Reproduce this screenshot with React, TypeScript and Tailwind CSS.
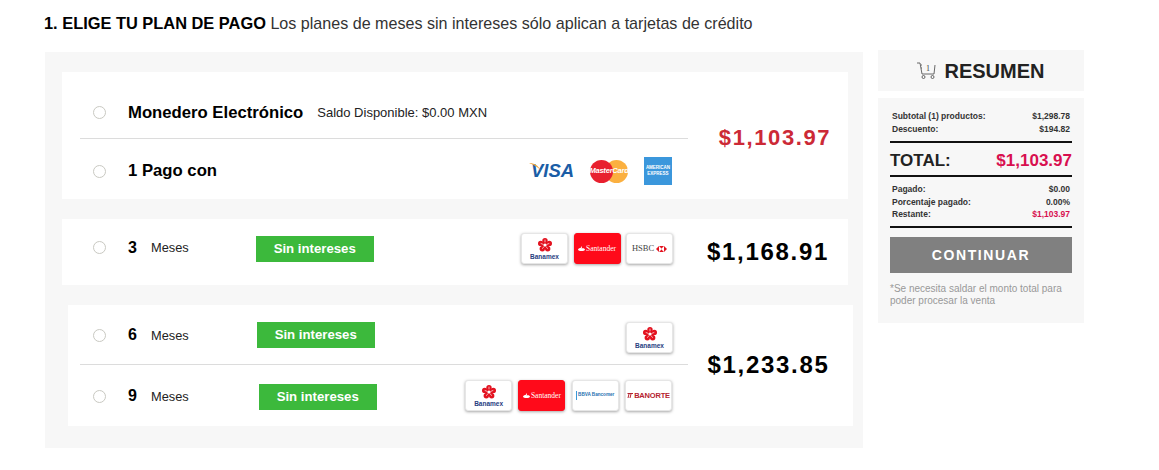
const Radio = () => (
  <span className="w-[13px] h-[13px] rounded-full border border-[#c9c9c2] bg-white shrink-0" />
);

const Badge = ({ className }: { className: string }) => (
  <span className={`w-[118px] h-[26px] bg-[#3cb93c] text-white text-[13.2px] font-bold flex items-center justify-center ${className}`}>
    Sin intereses
  </span>
);

const Flower = () => (
  <svg width="14" height="14" viewBox="0 0 26 26" className="block">
    <g fill="#e3121f">
      <circle cx="13" cy="5" r="5" />
      <circle cx="21" cy="10" r="5" />
      <circle cx="18" cy="20" r="5" />
      <circle cx="8" cy="20" r="5" />
      <circle cx="5" cy="10" r="5" />
      <circle cx="13" cy="13" r="7" />
    </g>
    <circle cx="13" cy="13" r="3" fill="#fff" />
    <path d="M13 3v5M21 10l-5 2M18 20l-3-4M8 20l3-4M5 10l5 2" stroke="#fff" strokeWidth="1.2" />
  </svg>
);

const BankCard = ({ children, red }: { children: React.ReactNode; red?: boolean }) => (
  <div className={`w-[47px] h-[31px] rounded-[3px] flex flex-col items-center justify-center border border-[#e6e6e6] shadow-[0_1px_3px_rgba(0,0,0,0.35)] ${red ? "bg-[#ff0a1a] border-[#ff0a1a]" : "bg-white"}`}>
    {children}
  </div>
);

const Banamex = () => (
  <BankCard>
    <Flower />
    <span className="text-[6.5px] leading-[7px] mt-[1px] font-bold text-[#27407f]">Banamex</span>
  </BankCard>
);

const Santander = () => (
  <BankCard red>
    <span className="flex items-center gap-[1px] text-white text-[7.5px] font-['Liberation_Serif',serif]">
      <svg width="7" height="5" viewBox="0 0 14 10">
        <path d="M7 0c2 2 1 3 0 5 3-1 6 0 7 2 0 2-4 3-7 3s-7-1-7-3c1-2 3-3 5-3 1-1 2-2 2-4z" fill="#fff" />
      </svg>
      Santander
    </span>
  </BankCard>
);

const Hsbc = () => (
  <BankCard>
    <span className="flex items-center gap-[2px] text-[#444] text-[8.5px] font-['Liberation_Serif',serif]">
      HSBC
      <svg width="11" height="6" viewBox="0 0 22 12">
        <path d="M0 6 6 0h10l6 6-6 6H6z" fill="#e3121f" />
        <path d="M6 0l6 6-6 6zM16 0l-6 6 6 6z" fill="#fff" />
      </svg>
    </span>
  </BankCard>
);

const Bbva = () => (
  <BankCard>
    <span className="flex items-center gap-[1px] text-[4.6px] font-bold text-[#1f6fb0] whitespace-nowrap">
      <span className="w-[1px] h-[9px] bg-[#3a9ad9]" />
      BBVA Bancomer
    </span>
  </BankCard>
);

const Banorte = () => (
  <BankCard>
    <span className="flex items-center text-[7.5px] font-bold text-[#b5232f] tracking-[-0.2px]">
      <svg width="6" height="5" viewBox="0 0 12 10" className="mr-[1px]">
        <path d="M2 0h10v2H9L7 10H5l2-8H5L3 10H1l2-8H0z" fill="#b5232f" />
      </svg>
      BANORTE
    </span>
  </BankCard>
);

const Row = ({ n, badge, children, height }: { n: string; badge: string; children: React.ReactNode; height: string }) => (
  <div className={`flex items-center pl-[13px] pr-[15px] ${height}`}>
    <Radio />
    <span className="ml-[22px] w-[23px] text-[16px] font-bold text-black">{n}</span>
    <span className="text-[12.8px] text-[#222] mt-[1px]">Meses</span>
    <Badge className={badge} />
    <div className="ml-auto flex items-center">{children}</div>
  </div>
);

const SummaryRow = ({ label, value, valueClass }: { label: string; value: string; valueClass?: string }) => (
  <div className="flex justify-between h-[12.5px] leading-[12.5px] px-[2px]">
    <span>{label}</span>
    <span className={valueClass}>{value}</span>
  </div>
);

export default function App() {
  return (
    <div className="w-[1159px] h-[470px] bg-white overflow-hidden font-['Liberation_Sans',Arial,sans-serif] text-[#111]">
      <h1 className="pl-[44px] pt-[14px] h-[50px] text-[16.1px] leading-[18px] font-normal text-[#333]">
        <b className="text-black text-[16.4px]">1. ELIGE TU PLAN DE PAGO</b> Los planes de meses sin intereses sólo aplican a tarjetas de crédito
      </h1>

      <div className="flex items-start pl-[45px] gap-[15px]">
        <div className="w-[818px] h-[396px] mt-[2px] bg-[#f7f7f7] pt-[20px] pl-[17px]">
          {/* contado */}
          <div className="w-[786px] h-[127px] bg-white flex pl-[18px]">
            <div className="w-[608px]">
              <div className="h-[67px] border-b border-[#dcdcdc] flex items-center pl-[13px] pt-[15px]">
                <Radio />
                <span className="ml-[22px] text-[16.7px] font-bold text-black">Monedero Electrónico</span>
                <span className="ml-[14px] text-[13px] text-[#222]">Saldo Disponible: $0.00 MXN</span>
              </div>
              <div className="h-[60px] flex items-center pl-[13px] pr-[16px] pt-[4px]">
                <Radio />
                <span className="ml-[22px] text-[16.7px] font-bold text-black">1 Pago con</span>
                <div className="ml-auto flex items-center gap-[16px]">
                  <span className="relative text-[#1a5da6] text-[18.5px] font-bold italic leading-none w-[45px] pl-[2px]">
                    <svg width="14" height="8" viewBox="0 0 14 8" className="absolute left-0 top-[1px]">
                      <path d="M0 0c5 0 9 2 12 8C9 4 5 2 0 0z" fill="#f2a53a" />
                    </svg>
                    VISA
                  </span>
                  <span className="relative w-[38px] h-[23px] flex items-center justify-center">
                    <svg width="38" height="23" viewBox="0 0 38 23" className="absolute inset-0">
                      <circle cx="26.500" cy="11.500" r="11.500" fill="#fbb040" />
                      <circle cx="11.500" cy="11.500" r="11.500" fill="#e8202f" />
                    </svg>
                    <span className="relative text-white text-[7.500px] font-bold italic tracking-[-0.2px]">MasterCard</span>
                  </span>
                  <span className="w-[28px] h-[28px] bg-[#3b97dc] flex flex-col items-center justify-center text-white text-[4.5px] font-bold leading-[6px]">
                    <span>AMERICAN</span>
                    <span>EXPRESS</span>
                  </span>
                </div>
              </div>
            </div>
            <div className="flex-1 flex items-center justify-center pl-[14px] pt-[3px]">
              <span className="text-[22px] font-bold tracking-[1.6px] text-[#cc2936]">$1,103.97</span>
            </div>
          </div>

          {/* 3 meses */}
          <div className="w-[786px] h-[66px] mt-[20px] bg-white flex pl-[18px]">
            <div className="w-[608px]">
              <Row n="3" badge="ml-[67px] mt-[3px]" height="h-[57px]">
                <div className="flex gap-[5.500px] mt-[2px]">
                  <Banamex />
                  <Santander />
                  <Hsbc />
                </div>
              </Row>
            </div>
            <div className="flex-1 flex items-center justify-center">
              <span className="text-[24px] font-bold tracking-[1.7px] text-black">$1,168.91</span>
            </div>
          </div>

          {/* 6 y 9 meses */}
          <div className="w-[785px] h-[121px] mt-[20px] ml-[6px] bg-white flex pl-[12px]">
            <div className="w-[608px]">
              <div className="border-b border-[#dcdcdc]">
                <Row n="6" badge="ml-[68px]" height="h-[59px] pt-[1px]">
                  <div className="mt-[5px]">
                    <Banamex />
                  </div>
                </Row>
              </div>
              <Row n="9" badge="ml-[70px] mt-[2px]" height="h-[61px] pt-[1px]">
                <div className="flex gap-[6.300px] mr-[1px] mb-[1px]">
                  <Banamex />
                  <Santander />
                  <Bbva />
                  <Banorte />
                </div>
              </Row>
            </div>
            <div className="flex-1 flex items-center justify-center pr-[4px] pb-[2px]">
              <span className="text-[24px] font-bold tracking-[1.7px] text-black">$1,233.85</span>
            </div>
          </div>
        </div>

        <div className="w-[206px]">
          <div className="h-[41px] bg-[#f7f7f7] flex items-center justify-center gap-[8px]">
            <svg width="19" height="17" viewBox="0 0 19 17" fill="none" stroke="#444" strokeWidth="0.8">
              <path d="M0 1h3l2 11h12l1-9" />
              <path d="M4 3h1M4 6h1" />
              <circle cx="6.500" cy="15" r="1.500" />
              <circle cx="15.500" cy="15" r="1.500" />
              <text x="9" y="9" fontSize="8" fill="#444" stroke="none" fontFamily="Liberation Serif">1</text>
            </svg>
            <span className="text-[20px] font-bold text-[#222]">RESUMEN</span>
          </div>
          <div className="h-[225px] mt-[7px] bg-[#f7f7f7] px-[12px] pt-[12px]">
            <div className="text-[8.500px] font-bold text-[#333]">
              <SummaryRow label="Subtotal (1) productos:" value="$1,298.78" />
              <SummaryRow label="Descuento:" value="$194.82" />
            </div>
            <div className="mt-[6px] border-y-2 border-[#111] h-[36px] pt-[3px] flex items-center justify-between">
              <span className="text-[17px] font-bold text-[#222]">TOTAL:</span>
              <span className="text-[17px] font-bold text-[#d80f4f]">$1,103.97</span>
            </div>
            <div className="pt-[6px] text-[8.500px] font-bold text-[#333]">
              <SummaryRow label="Pagado:" value="$0.00" />
              <SummaryRow label="Porcentaje pagado:" value="0.00%" />
              <SummaryRow label="Restante:" value="$1,103.97" valueClass="text-[#d80f4f]" />
            </div>
            <div className="mt-[5px] border-t-2 border-[#111]" />
            <button className="mt-[9px] w-full h-[36px] pt-[1px] bg-[#808080] text-white text-[14px] font-bold tracking-[1.6px]">
              CONTINUAR
            </button>
            <p className="mt-[10px] text-[10px] leading-[12px] text-[#999]">
              *Se necesita saldar el monto total para poder procesar la venta
            </p>
          </div>
        </div>
      </div>
    </div>
  );
}
